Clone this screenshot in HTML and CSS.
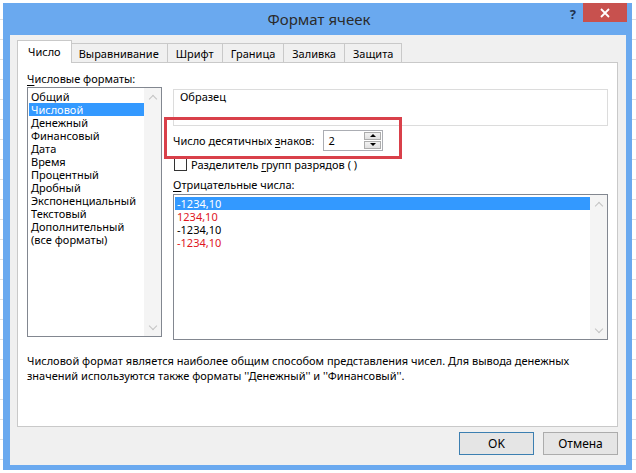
FILE: index.html
```html
<!DOCTYPE html>
<html lang="ru">
<head>
  <meta charset="UTF-8" />
  <title>Формат ячеек</title>
  <link rel="stylesheet" href="styles.css">
</head>
<body>
  <div class="window">
    <div class="titlebar">
      <span class="title">Формат ячеек</span>
      <span class="help">?</span>
      <span class="close">
        <svg width="10" height="10" viewBox="0 0 10 10"><path d="M1 1 L9 9 M9 1 L1 9" stroke="#fff" stroke-width="1.8"/></svg>
      </span>
    </div>

    <div class="client">
      <div class="tabs">
        <div class="tab active">Число</div>
        <div class="tab">Выравнивание</div>
        <div class="tab">Шрифт</div>
        <div class="tab">Граница</div>
        <div class="tab">Заливка</div>
        <div class="tab">Защита</div>
      </div>

      <div class="panel">
        <div class="columns">
          <div class="left-col">
            <div class="label"><u>Ч</u>исловые форматы:</div>
            <div class="listbox formats">
              <ul class="items">
                <li>Общий</li>
                <li class="selected">Числовой</li>
                <li>Денежный</li>
                <li>Финансовый</li>
                <li>Дата</li>
                <li>Время</li>
                <li>Процентный</li>
                <li>Дробный</li>
                <li>Экспоненциальный</li>
                <li>Текстовый</li>
                <li>Дополнительный</li>
                <li>(все форматы)</li>
              </ul>
              <div class="scrollbar">
                <span class="arrow up"></span>
                <span class="arrow down"></span>
              </div>
            </div>
          </div>

          <div class="right-col">
            <div class="sample">
              <div class="sample-title">Образец</div>
            </div>

            <div class="decimals">
              <span>Число десятичных <u>з</u>наков:</span>
              <div class="spin">
                <span class="spin-value">2</span>
                <div class="spin-buttons">
                  <span class="spin-btn"><span class="tri up"></span></span>
                  <span class="spin-btn"><span class="tri down"></span></span>
                </div>
              </div>
            </div>

            <div class="check-row">
              <span class="checkbox"></span>
              <span>Разделитель <u>г</u>рупп разрядов ( )</span>
            </div>

            <div class="label neg-label"><u>О</u>трицательные числа:</div>
            <div class="listbox negatives">
              <ul class="items">
                <li class="selected">-1234,10</li>
                <li class="red">1234,10</li>
                <li>-1234,10</li>
                <li class="red">-1234,10</li>
              </ul>
              <div class="scrollbar">
                <span class="arrow up"></span>
                <span class="arrow down"></span>
              </div>
            </div>
          </div>
        </div>

        <p class="description">Числовой формат является наиболее общим способом представления чисел. Для вывода денежных значений используются также форматы ''Денежный'' и ''Финансовый''.</p>

        <div class="callout"></div>
      </div>

      <div class="buttons">
        <button class="btn default">OK</button>
        <button class="btn">Отмена</button>
      </div>
    </div>
  </div>
</body>
</html>
```

FILE: styles.css
```css
body {
  margin: 0;
  padding: 3px 4px 3px 3px;
  font-family: 'Noto Sans', 'Liberation Sans', sans-serif;
  font-size: 11px;
  color: #000;
  background-color: #fff;
  background-image: repeating-linear-gradient(to bottom, #fff 0, #fff 19px, #dcdfe2 19px, #dcdfe2 20px);
}

.window {
  width: 629px;
  height: 467px;
  background-color: #6aa9ef;
  display: flex;
  flex-direction: column;
  box-sizing: border-box;
  padding: 0 6px 5px 7px;
}

.titlebar {
  height: 32px;
  display: flex;
  align-items: flex-start;
  position: relative;
}

.title {
  flex: 1;
  text-align: center;
  font-size: 15px;
  line-height: 32px;
  color: #2b2b2b;
  padding-left: 2px;
}

.help {
  position: absolute;
  right: 50px;
  top: 2px;
  font-weight: bold;
  font-size: 13px;
  color: #1e3350;
}

.close {
  position: absolute;
  right: -1px;
  top: 0;
  width: 44px;
  height: 19px;
  background-color: #c8514e;
  display: flex;
  align-items: center;
  justify-content: center;
}

.client {
  flex: 1;
  background-color: #f0f0f0;
  padding: 7px 8px 0 7px;
  display: flex;
  flex-direction: column;
}

.tabs {
  display: flex;
  height: 20px;
  padding-left: 2px;
  align-items: flex-end;
}

.tab {
  height: 19px;
  line-height: 19px;
  padding: 0 8px;
  border: 1px solid #c9c9c9;
  border-bottom: none;
  border-left: none;
  background-color: #f0f0f0;
  box-sizing: border-box;
}

.tab.active {
  height: 23px;
  margin: 0 -1px -1px -2px;
  padding: 0 10px;
  background-color: #fff;
  border-left: 1px solid #c9c9c9;
  position: relative;
  z-index: 1;
  line-height: 21px;
}

.panel {
  height: 365px;
  background-color: #fff;
  border: 1px solid #c9c9c9;
  box-sizing: border-box;
  padding: 8px 9px 0 9px;
  position: relative;
}

.columns {
  display: flex;
  gap: 11px;
}

.left-col {
  width: 135px;
}

.right-col {
  flex: 1;
  padding-top: 18px;
}

.label {
  line-height: 15px;
  margin-bottom: 1px;
}

u {
  text-decoration-thickness: 1px;
  text-underline-offset: 2px;
}

.listbox {
  border: 1px solid #828790;
  display: flex;
  box-sizing: border-box;
}

.formats {
  height: 250px;
}

.negatives {
  height: 146px;
}

.items {
  list-style: none;
  margin: 0;
  padding: 2px 0 0 1px;
  flex: 1;
}

.items li {
  height: 13px;
  line-height: 13px;
  padding-left: 2px;
  white-space: nowrap;
}

.items li.selected {
  background-color: #3399ff;
  color: #fff;
}

.items li.red {
  color: #e0161e;
}

.scrollbar {
  width: 17px;
  background-color: #f4f4f4;
  display: flex;
  flex-direction: column;
  justify-content: space-between;
  align-items: center;
  padding: 6px 0 5px;
  box-sizing: border-box;
}

.arrow {
  width: 5px;
  height: 5px;
  border-left: 1.5px solid #c4c4c4;
  border-top: 1.5px solid #c4c4c4;
}

.arrow.up {
  transform: rotate(45deg);
  margin-top: 2px;
}

.arrow.down {
  transform: rotate(225deg);
  margin-bottom: 2px;
}

.sample {
  height: 37px;
  border: 1px solid #dcdcdc;
  box-sizing: border-box;
}

.sample-title {
  padding: 0 0 0 6px;
  line-height: 13px;
}

.decimals {
  display: flex;
  align-items: center;
  height: 22px;
  margin-top: 3px;
}

.spin {
  margin-left: 9px;
  width: 60px;
  height: 21px;
  border: 1px solid #abadb3;
  box-sizing: border-box;
  display: flex;
}

.spin-value {
  flex: 1;
  padding-left: 4px;
  line-height: 19px;
}

.spin-buttons {
  width: 17px;
  display: flex;
  flex-direction: column;
  padding: 1px 1px 1px 0;
  gap: 1px;
}

.spin-btn {
  flex: 1;
  border: 1px solid #acacac;
  background: linear-gradient(#f2f2f2, #e0e0e0);
  display: flex;
  align-items: center;
  justify-content: center;
}

.tri {
  width: 0;
  height: 0;
  border-left: 3px solid transparent;
  border-right: 3px solid transparent;
}

.tri.up {
  border-bottom: 3px solid #000;
}

.tri.down {
  border-top: 3px solid #000;
}

.check-row {
  display: flex;
  align-items: center;
  gap: 4px;
  height: 16px;
  margin-top: 5px;
}

.checkbox {
  width: 13px;
  height: 13px;
  border: 1px solid #333;
  box-sizing: border-box;
  background-color: #fff;
  margin-left: 1px;
}

.neg-label {
  margin-top: 5px;
  margin-bottom: 2px;
}

.description {
  margin: 13px 0 0 0;
  line-height: 15px;
  width: 570px;
}

.callout {
  position: absolute;
  left: 146px;
  top: 54px;
  width: 238px;
  height: 42px;
  border: 3px solid #d9404a;
  box-sizing: border-box;
}

.buttons {
  display: flex;
  justify-content: flex-end;
  gap: 9px;
  padding-top: 5px;
}

.btn {
  width: 75px;
  height: 23px;
  font-family: inherit;
  font-size: 12px;
  background-color: #e5e5e5;
  border: 1px solid #acacac;
  color: #000;
  padding: 0;
}

.btn.default {
  border-color: #3c7fb1;
}
```
